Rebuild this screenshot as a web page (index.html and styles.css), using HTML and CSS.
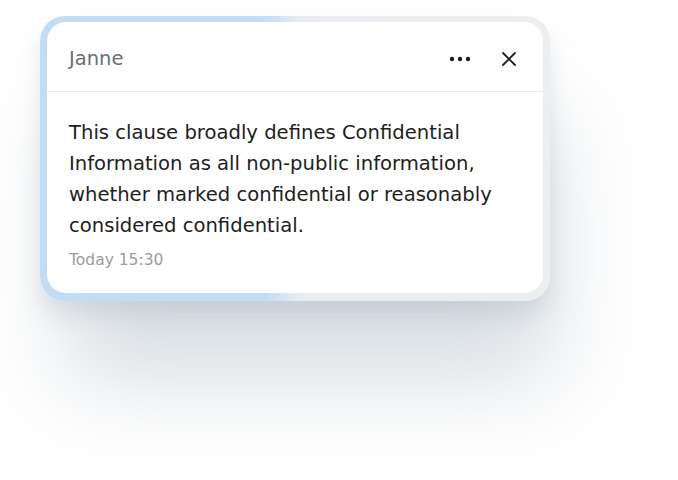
FILE: index.html
```html
<!DOCTYPE html>
<html>
<head>
<meta charset="utf-8">
<link rel="stylesheet" href="styles.css">
</head>
<body>
<div class="stage">
  <div class="frame">
    <div class="card">
      <div class="card-header">
        <span class="author">Janne</span>
        <div class="actions">
          <svg class="icon-more" width="22" height="6" viewBox="0 0 22 6"><circle cx="3" cy="3" r="2.2" fill="#1c1c1c"/><circle cx="11" cy="3" r="2.2" fill="#1c1c1c"/><circle cx="19" cy="3" r="2.2" fill="#1c1c1c"/></svg>
          <svg class="icon-close" width="16" height="16" viewBox="0 0 16 16"><path d="M2 2 L14 14 M14 2 L2 14" stroke="#1c1c1c" stroke-width="1.8" stroke-linecap="round"/></svg>
        </div>
      </div>
      <div class="card-body">
        <p class="comment">This clause broadly defines Confidential Information as all non-public information, whether marked confidential or reasonably considered confidential.</p>
        <div class="time">Today 15:30</div>
      </div>
    </div>
  </div>
</div>
</body>
</html>
```
FILE: styles.css
```css
html, body {
  margin: 0;
  padding: 0;
  background: #ffffff;
  font-family: "DejaVu Sans", "Liberation Sans", sans-serif;
}
body {
  min-height: 480px;
}
.stage {
  padding: 16px 0 0 40px;
}
.frame {
  width: 510px;
  box-sizing: border-box;
  padding: 6px 7px 8px 7px;
  border-radius: 25px;
  background: linear-gradient(90deg, #c2dcf4 0%, #c2dcf4 44%, #e9edf1 51%, #eceef0 100%);
  box-shadow: 15px 90px 90px -10px rgba(115, 135, 155, 0.28), 0 14px 22px rgba(115, 135, 155, 0.18);
}
.card {
  background: #ffffff;
  border-radius: 19px;
  overflow: hidden;
}
.card-header {
  height: 70px;
  box-sizing: border-box;
  display: flex;
  align-items: center;
  justify-content: space-between;
  padding: 4px 26px 0 22px;
  border-bottom: 1px solid #e9e9f1;
}
.author {
  font-size: 19.5px;
  color: #6b6e74;
}
.actions {
  display: flex;
  align-items: center;
  gap: 30px;
}
.icon-more { display: block; }
.icon-close { display: block; }
.card-body {
  padding: 25px 22px 23px 22px;
}
.comment {
  margin: 0;
  font-size: 19.6px;
  line-height: 31px;
  color: #1e1e1e;
}
.time {
  margin-top: 9px;
  font-size: 15.5px;
  line-height: 20px;
  color: #9a9ca1;
}
```
